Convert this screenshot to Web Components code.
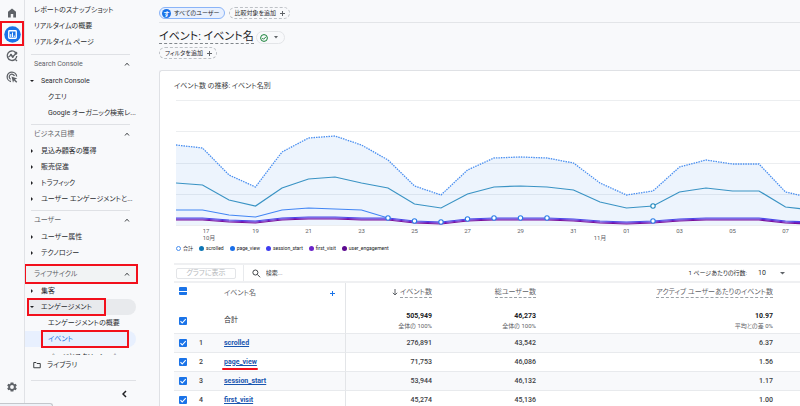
<!DOCTYPE html>
<html lang="ja">
<head>
<meta charset="utf-8">
<title>イベント: イベント名</title>
<style>
html, body { margin: 0; height: 100%; }
body {
  font-family: Roboto, "Noto Sans CJK JP", sans-serif;
  font-feature-settings: "palt";
  font-size: 7px; line-height: 16px; color: #2a2c30;
  background: #f8f9fb; overflow: hidden;
  --mark: #f2101c;
}
</style>
</head>
<body>
<analytics-app></analytics-app>
<script>
const define = (name, html, init) => {
  const tpl = document.createElement('template');
  tpl.innerHTML = html;
  customElements.define(name, class extends HTMLElement {
    connectedCallback() {
      if (this.shadowRoot) return;
      this.attachShadow({ mode: 'open' }).append(tpl.content.cloneNode(true));
      if (init) init(this, this.shadowRoot);
    }
  });
};

define('icon-rail', `
<style>
:host { display: flex; flex-direction: column; align-items: center; width: 24px; flex: none; border-right: 1px solid #e0e2e6; padding-top: 2px; box-sizing: content-box; }
button { all: unset; display: grid; place-items: center; width: 24px; height: 21px; color: #5f6368; position: relative; }
button.on { height: 22px; }
button.on::after { content: ""; position: absolute; inset: -2px 0 -1px; border: 2px solid var(--mark); }
.gear { margin-top: auto; margin-bottom: 9px; }
</style>
<button aria-label="ホーム"><svg width="10" height="10" viewBox="0 0 20 20"><path d="M2 7.500 10 1l8 6.500V19h-5.500v-7h-5v7H2z" fill="currentColor"/></svg></button>
<button class="on" aria-label="レポート"><svg width="17" height="17" viewBox="0 0 34 34"><circle cx="17" cy="17" r="16.500" fill="#1a73e8"/><rect x="9.500" y="9.500" width="15" height="15" rx="1.500" fill="#1a73e8" stroke="#fff" stroke-width="2.800"/><path d="M13.500 16v6M17 13v9M20.500 19v3" stroke="#fff" stroke-width="2"/></svg></button>
<button aria-label="探索"><svg width="12" height="12" viewBox="0 0 24 24" fill="none" stroke="currentColor" stroke-width="2.600"><path d="M19 5A9.500 9.500 0 1 0 21.500 12M18.500 18.500 22 22M5 14l5-4 3.500 3.500L20 7"/><circle cx="10" cy="10" r="1"/><circle cx="13.500" cy="13.500" r="1"/><circle cx="20" cy="6.500" r="1.500"/></svg></button>
<button aria-label="広告"><svg width="12" height="12" viewBox="0 0 24 24" fill="none" stroke="currentColor" stroke-width="2.600"><path d="M10 21A9.500 9.500 0 1 1 21.300 11M9.500 16.500A5.300 5.300 0 1 1 16.800 10"/><path d="m11 11 11.500 4-4.500 2 4.500 4.500-2 2-4.500-4.500-2 4.500z" fill="currentColor" stroke="none"/></svg></button>
<button class="gear" aria-label="管理"><svg width="12" height="12" viewBox="0 0 24 24"><path fill="currentColor" fill-rule="evenodd" d="M19.400 13a7 7 0 0 0 0-2l2.200-1.700-2.100-3.700-2.600 1a7.500 7.500 0 0 0-1.700-1L14.800 2.800H9.200L8.800 5.600a7.500 7.500 0 0 0-1.700 1l-2.600-1L2.400 9.300 4.600 11a7 7 0 0 0 0 2l-2.200 1.700 2.100 3.700 2.600-1a7.500 7.500 0 0 0 1.700 1l.4 2.800h5.600l.4-2.800a7.500 7.500 0 0 0 1.700-1l2.600 1 2.100-3.700zM12 15.800a3.800 3.800 0 1 1 0-7.600 3.800 3.800 0 0 1 0 7.600z"/></svg></button>
`);

define('nav-item', `
<style>
:host { display: block; height: 16px; margin-right: 12px; position: relative; }
a { display: flex; align-items: center; height: 16px; padding-left: 9px; color: inherit; text-decoration: none; white-space: nowrap; }
i { width: 11px; flex: none; display: grid; }
:host([level="0"]) i, :host([level="2"]) i { display: none; }
:host([level="1"]) a { padding-left: 5px; }
:host([level="2"]) a { padding-left: 23px; }
svg { display: none; fill: #202124; }
:host([state="closed"]) .c, :host([state="open"]) .o { display: block; }
:host([shade]) { background: #e8eaed; border-radius: 0 8px 8px 0; margin-left: 2px; }
:host([shade]) a { padding-left: 3px; }
:host([current]) { background: #e8f0fe; color: #1a73e8; border-radius: 0 8px 8px 0; }
:host([mark])::after { content: ""; position: absolute; border: 2px solid var(--mark); top: -1px; bottom: -1px; left: 0; right: 30px; }
:host([current])::after { left: 16px; right: 7px; }
:host([after]) { margin-top: 2px; }
</style>
<a href="#"><i><svg class="c" width="4" height="6" viewBox="0 0 4 6"><path d="M1 1l2 2-2 2z"/></svg><svg class="o" width="4" height="4" viewBox="0 0 4 4"><path d="M0 1h4L2 3z"/></svg></i><span><slot></slot></span></a>
`);

define('nav-section', `
<style>
:host { display: block; }
button { all: unset; display: flex; justify-content: space-between; align-items: center; box-sizing: border-box; height: 18px; width: 113px; padding: 0 8px 0 9px; color: #5f6368; position: relative; }
hr { border: 0; height: 1px; background: #dfe1e5; margin: 3px 18px 0 6px; }
:host([first]) hr { margin-top: 4px; }
:host([mark]) button { background: #f1f3f4; }
:host([mark]) button::after { content: ""; position: absolute; inset: -1px 0 -1px -1px; border: 2px solid var(--mark); }
</style>
<hr><button aria-expanded="true"><span></span><svg width="6" height="4" viewBox="0 0 6 4"><path d="M1 3.500 3 1.200 5 3.500" fill="none" stroke="#3c4043"/></svg></button>
<slot></slot>
`, (el, r) => { r.querySelector('span').textContent = el.getAttribute('label'); });

define('side-nav', `
<style>
:host { display: flex; flex-direction: column; width: 123px; flex: none; }
nav { flex: 1; min-height: 0; overflow: hidden; padding-top: 2px; }
.lib { display: flex; align-items: center; gap: 6px; height: 20px; padding-left: 8px; color: inherit; text-decoration: none; }
hr { border: 0; height: 1px; background: #dfe1e5; margin: 5px 12px 0 6px; }
footer { height: 25px; display: flex; justify-content: flex-end; align-items: center; padding-right: 21px; }
button { all: unset; display: grid; }
</style>
<nav>
<nav-item level="0">レポートのスナップショット</nav-item>
<nav-item level="0">リアルタイムの概要</nav-item>
<nav-item level="0">リアルタイム ページ</nav-item>
<nav-section label="Search Console" first>
<nav-item level="1" state="open">Search Console</nav-item>
<nav-item level="2">クエリ</nav-item>
<nav-item level="2">Google オーガニック検索レ...</nav-item>
</nav-section>
<nav-section label="ビジネス目標">
<nav-item level="1" state="closed">見込み顧客の獲得</nav-item>
<nav-item level="1" state="closed">販売促進</nav-item>
<nav-item level="1" state="closed">トラフィック</nav-item>
<nav-item level="1" state="closed">ユーザー エンゲージメントと...</nav-item>
</nav-section>
<nav-section label="ユーザー">
<nav-item level="1" state="closed">ユーザー属性</nav-item>
<nav-item level="1" state="closed">テクノロジー</nav-item>
</nav-section>
<nav-section label="ライフサイクル" mark>
<nav-item level="1" state="closed">集客</nav-item>
<nav-item level="1" state="open" shade mark>エンゲージメント</nav-item>
<nav-item level="2">エンゲージメントの概要</nav-item>
<nav-item level="2" current mark>イベント</nav-item>
<nav-item level="2" after>ページとスクリーン: ペー...</nav-item>
</nav-section>
</nav>
<a class="lib" href="#"><svg width="8" height="8" viewBox="0 0 16 16"><path d="M1.500 3h4.500l2 2h6.500v8.500h-13z" fill="none" stroke="#3c4043" stroke-width="2"/></svg>ライブラリ</a>
<hr>
<footer><button aria-label="閉じる"><svg width="5" height="8" viewBox="0 0 5 8"><path d="M4 1 1 4l3 3" fill="none" stroke="#202124" stroke-width="1.500"/></svg></button></footer>
`);

define('filter-chip', `
<style>
:host { display: block; font-size: 6px; }
button { all: unset; box-sizing: border-box; display: flex; align-items: center; gap: 3px; height: 12px; line-height: 10px; padding: 0 3px 0 5px; border: 1px dashed #bdc1c6; border-radius: 6px; white-space: nowrap; }
:host([active]) button { background: #e8f0fe; border: 1px solid #8ab4f8; padding: 0 4px 0 2px; }
b { display: none; width: 9px; height: 9px; border-radius: 50%; background: #1a73e8; color: #fff; font-size: 6px; line-height: 9px; text-align: center; }
:host([active]) b { display: block; }
:host([active]) svg { display: none; }
</style>
<button><b>す</b><slot></slot><svg width="7" height="7" viewBox="0 0 7 7"><path d="M3.500 1v5M1 3.500h5" stroke="#5f6368"/></svg></button>
`);

define('report-header', `
<style>
:host { display: block; padding-left: 9px; }
.chips { display: flex; gap: 4px; padding: 7px 0 3px; border-bottom: 1px solid #e3e5e8; }
.title { display: flex; align-items: center; gap: 2px; padding: 8px 0 3px; }
h1 { margin: 0; font-size: 11px; line-height: 12px; font-weight: 400; color: #202124; border-bottom: 1px dashed #80868b; white-space: nowrap; }
.status { all: unset; box-sizing: border-box; display: flex; align-items: center; gap: 6px; height: 13px; padding: 0 6px 0 3px; border: 1px solid #e3e5e8; border-radius: 7px; }
.row { display: flex; }
</style>
<div class="chips"><filter-chip active>すべてのユーザー</filter-chip><filter-chip>比較対象を追加</filter-chip></div>
<div class="title"><h1>イベント: イベント名</h1>
<button class="status" aria-label="データの品質"><svg width="8" height="8" viewBox="0 0 16 16" fill="none" stroke="#188038" stroke-width="2"><circle cx="8" cy="8" r="6.800"/><path d="m4.500 8 2.500 2.500 5-5"/></svg><svg width="4" height="3" viewBox="0 0 4 3"><path d="M0 0h4L2 2.500z" fill="#5f6368"/></svg></button></div>
<div class="row"><filter-chip>フィルタを追加</filter-chip></div>
`);

define('trend-chart', `
<style>
:host { display: block; padding-left: 2px; }
svg { display: block; width: 100%; height: auto; }
text { font-size: 6px; fill: #5f6368; text-anchor: middle; }
ul { list-style: none; display: flex; flex-wrap: wrap; gap: 6px; margin: 0; padding: 0; font-size: 5px; line-height: 10px; color: #202124; }
li { display: flex; align-items: center; gap: 2px; }
li::before { content: ""; width: 5px; height: 5px; border-radius: 50%; background: var(--c); }
li.t::before { background: #fff; box-sizing: border-box; border: 1px solid #4a90f0; }
</style>
<svg viewBox="0 0 624 151" role="img" aria-label="イベント数の推移"></svg>
<ul><li class="t">合計</li><li style="--c:#0d76b5">scrolled</li><li style="--c:#1a6fe8">page_view</li><li style="--c:#3f3df0">session_start</li><li style="--c:#6a24c9">first_visit</li><li style="--c:#5c0a90">user_engagement</li></ul>
`, (el, r) => {
  const total = [52,55,82,94,59,45,43,52,67,93,102,77,65,64,65,70,90,102,98,74,67,71,71,99,105];
  const scrolled = [90,92,107,113,95,86,84,90,95,111,115,101,94,93,94,97,109,115,113,99,95,98,98,114,117];
  const view = [117,117,122,124,117,115,116,117,125];
  const session = [125,125,127,128,125,124,124,125,125,128,129,126,125,125,125,126,128,129,128,126,125,125,125,128,129];
  const x = i => i * 53 / 2;
  const line = (d, dy = 0) => d.map((v, i) => x(i) + ',' + (v + dy)).join(' ');
  let s = '';
  for (const y of [8, 39, 71, 102, 133]) s += `<path d="M0 ${y}.500H640" stroke="#eceef0"/>`;
  s += `<polygon points="0,133 ${line(total, 1)} 636,133" fill="#1a73e8" opacity=".08"/>`;
  s += `<polyline points="${line(total, 1)}" fill="none" stroke="#4a8ff0" stroke-width="1.300" stroke-dasharray="1.500 1"/>`;
  const add = (d, c, dy) => s += `<polyline points="${line(d, dy)}" fill="none" stroke="${c}" stroke-width="1.200"/>`;
  add(scrolled, '#3a93c4', 1);
  add(view, '#4285f4', 1);
  add(session, '#7a0f9a', 3);
  add(session, '#6a24c9', 2);
  add(session, '#4a48e8', 1);
  const dot = (i, y, c) => s += `<circle cx="${x(i)}" cy="${y}" r="2.200" fill="#fff" stroke="${c}" stroke-width="1.100"/>`;
  [8,9,10,11,12,13,14,18].forEach(i => dot(i, session[i] + 1, '#2a7de8'));
  dot(18, 114, '#1f88bd');
  ['17','19','21','23','25','27','29','31','01','03','05','07'].forEach((t, k) => {
    s += `<text x="${k ? x(2 * k + 1) : 30}" y="141">${t}</text>`;
  });
  s += '<text x="33" y="148">10月</text><text x="424" y="148">11月</text>';
  r.querySelector('svg').innerHTML = s;
});

define('event-table', `
<style>
:host { display: block; }
.bar { display: flex; align-items: stretch; height: 16px; border-top: 2px solid #eff0f2; }
.plot { all: unset; box-sizing: border-box; width: 60px; height: 11px; line-height: 9px; margin: 3px 7px 3px 2px; border: 1px solid #e3e5e8; border-radius: 2px; text-align: center; color: #b4b7bb; }
.search { flex: 1; display: flex; align-items: center; gap: 5px; padding-left: 8px; border-left: 1px solid #e8eaed; }
input[type=search] { all: unset; width: 100%; font-size: 6px; }
input::placeholder { color: #3c4043; }
.rows { display: flex; align-items: center; gap: 11px; padding-right: 15px; white-space: nowrap; font-size: 6px; }
select { all: unset; width: 28px; font-size: 7px; }
.sel { display: flex; align-items: center; }
.sel svg { margin-left: -6px; }
table { table-layout: fixed; width: 100%; border-collapse: separate; border-spacing: 0; border-top: 2px solid #eff0f2; }
th, td { padding: 0; height: 18px; border-bottom: 1px solid #e8eaed; text-align: right; white-space: nowrap; line-height: 9px; }
th { font-weight: 400; color: #5f6368; vertical-align: top; }
thead th { border-bottom: 0; height: 25px; }
tbody tr:first-child td { height: 25px; }
tbody tr:nth-child(n+2) td { font-weight: 500; color: #3c4043; }
tbody tr:nth-child(even) { background: #f8f9fb; }
td:nth-child(-n+3), th:nth-child(-n+2) { text-align: left; }
td:nth-child(2) { padding-left: 7px; }
td:nth-child(3) { border-right: 1px solid #e3e5e8; }
th:nth-child(2) { border-right: 1px solid #e3e5e8; }
.n { display: flex; justify-content: space-between; padding: 6px 9px 0 32px; }
.n button { all: unset; color: #1a73e8; display: grid; place-items: center; }
th span { border-bottom: 1px dashed #9aa0a6; display: inline-block; margin-top: 4px; line-height: 10px; }
th svg { vertical-align: middle; }
td:last-child, th:last-child { padding-right: 27px; }
small { display: block; font-size: 6px; color: #5f6368; }
strong { font-weight: 700; color: #202124; display: block; }
input[type=checkbox] { appearance: none; display: block; width: 8px; height: 8px; margin: 0 0 0 5px; border-radius: 1px; background: #1a73e8 url("data:image/svg+xml,%3Csvg xmlns='http://www.w3.org/2000/svg' viewBox='0 0 8 8'%3E%3Cpath d='M1.500 4.200 3.200 6 6.700 2.200' fill='none' stroke='white' stroke-width='1.100'/%3E%3C/svg%3E"); }
th input[type=checkbox] { margin-top: 4px; background: linear-gradient(#fff,#fff) center / 8px 1px no-repeat #1a73e8; }
td a { color: #1a56b0; text-decoration: underline; font-weight: 700; position: relative; }
a.mark::after { content: ""; position: absolute; left: -2px; right: -1px; top: 10px; height: 2px; border-radius: 1px; background: var(--mark); }
</style>
<div class="bar"><button class="plot">グラフに表示</button>
<label class="search"><svg width="9" height="9" viewBox="0 0 9 9" fill="none" stroke="#3c4043"><circle cx="3.500" cy="3.500" r="2.600"/><path d="m5.400 5.400 3 3"/></svg><input type="search" placeholder="検索..." aria-label="検索"></label>
<label class="rows">1 ページあたりの行数: <span class="sel"><select><option>10</option></select><svg width="5" height="3" viewBox="0 0 5 3"><path d="M0 0h5L2.500 2.500z" fill="#5f6368"/></svg></span></label></div>
<table>
<colgroup><col style="width:18px"><col style="width:32px"><col style="width:122px"><col style="width:86px"><col style="width:104px"><col></colgroup>
<thead><tr><th><input type="checkbox" checked aria-label="すべて選択"></th><th colspan="2"><div class="n">イベント名<button aria-label="追加"><svg width="7" height="7" viewBox="0 0 7 7"><path d="M3.500 1v5M1 3.500h5" stroke="currentColor"/></svg></button></div></th><th><svg width="6" height="7" viewBox="0 0 6 7"><path d="M3 0v6M.8 3.800 3 6l2.200-2.200" fill="none" stroke="#5f6368"/></svg> <span>イベント数</span></th><th><span>総ユーザー数</span></th><th><span>アクティブ ユーザーあたりのイベント数</span></th></tr></thead>
<tbody></tbody>
</table>
`, (el, r) => {
  const box = n => `<td><input type="checkbox" checked aria-label="${n}"></td>`;
  const rows = [['scrolled','276,891','43,542','6.37'],['page_view','71,753','46,086','1.56'],['session_start','53,944','46,132','1.17'],['first_visit','45,274','45,136','1.00']];
  const tot = [['505,949','全体の 100%'],['46,273','全体の 100%'],['10.97','平均との差 0%']];
  r.querySelector('tbody').innerHTML =
    `<tr>${box('合計')}<td></td><td>合計</td>${tot.map(t => `<td><strong>${t[0]}</strong><small>${t[1]}</small></td>`).join('')}</tr>` +
    rows.map((w, i) => `<tr>${box(w[0])}<td>${i + 1}</td><td><a href="#"${i === 1 ? ' class="mark"' : ''}>${w[0]}</a></td>${w.slice(1).map(v => `<td>${v}</td>`).join('')}</tr>`).join('');
});

define('report-card', `
<style>
:host { display: block; margin: 11px 0 0 11px; padding: 10px 0 0 14px; background: #fff; border: 1px solid #dfe1e5; border-right: 0; border-radius: 3px 0 0 0; }
h2 { margin: 0 0 1px; font-size: 7px; line-height: 10px; font-weight: 400; color: #3c4043; }
trend-chart { margin-bottom: 10px; }
</style>
<h2>イベント数 の推移: イベント名別</h2>
<trend-chart></trend-chart>
<event-table></event-table>
`);

define('analytics-app', `
<style>
:host { display: flex; height: 100vh; overflow: hidden; position: relative; }
main { flex: 1; min-width: 0; }
report-header { margin-left: 2px; }
.tip { position: absolute; left: -1px; bottom: 0; width: 52px; height: 2px; background: #eef2f8; border: 1px solid #c4c7cc; border-bottom: 0; border-radius: 0 3px 0 0; }
</style>
<icon-rail></icon-rail>
<side-nav></side-nav>
<main><report-header></report-header><report-card></report-card></main>
<div class="tip"></div>
`);
</script>
</body>
</html>
